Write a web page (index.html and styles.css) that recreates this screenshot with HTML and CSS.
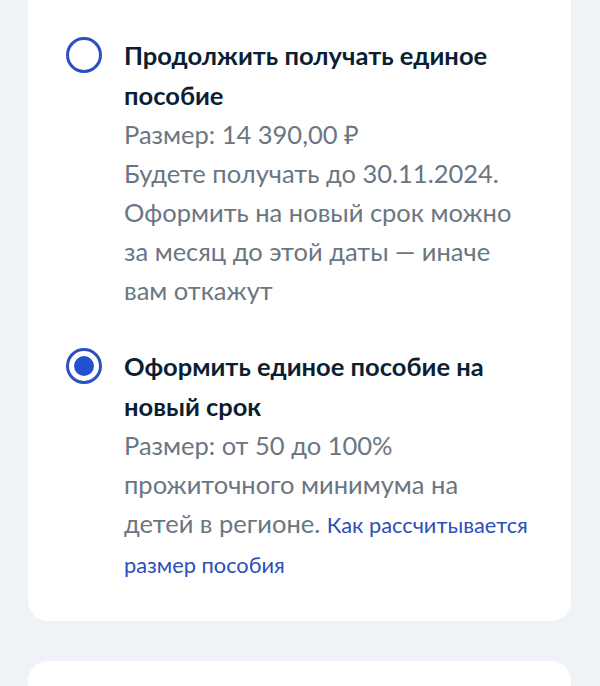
FILE: index.html
```html
<!DOCTYPE html>
<html lang="ru">
<head>
  <meta charset="UTF-8">
  <title>Единое пособие</title>
  <meta name="viewport" content="width=device-width, initial-scale=1.0">
  <link rel="stylesheet" href="styles.css">
</head>
<body>

  <div class="page">
    <div class="card">
      <!-- Вариант 1 -->
      <div class="option">
        <span class="radio"></span>
        <div class="option-text">
          <div class="option-title">Продолжить получать единое пособие</div>
          <div class="option-desc">
            Размер: 14 390,00 ₽<br>
            Будете получать до 30.11.2024. Оформить на новый срок можно за месяц до этой даты — иначе вам откажут
          </div>
        </div>
      </div>

      <!-- Вариант 2 -->
      <div class="option">
        <span class="radio checked"></span>
        <div class="option-text">
          <div class="option-title">Оформить единое пособие на новый срок</div>
          <div class="option-desc">
            Размер: от 50 до 100% прожиточного минимума на детей в регионе. <a href="#" class="link">Как рассчитывается размер пособия</a>
          </div>
        </div>
      </div>
    </div>

    <div class="card card-next"></div>
  </div>

</body>
</html>
```

FILE: styles.css
```css
body {
  margin: 0;
  background: #eff2f7;
  font-family: Lato, "Open Sans", Arial, sans-serif;
  color: #0b1f33;
}
.page {
  padding: 0 29px 0 28px;
}
.card {
  background: white;
  border-radius: 0 0 20px 20px;
  padding: 35px 40px 37px 38px;
}
.card-next {
  margin-top: 40px;
  border-radius: 20px;
  height: 80px;
  padding: 0;
}
.option {
  display: flex;
  gap: 22px;
}
.option + .option {
  margin-top: 36px;
}
.radio {
  flex: none;
  box-sizing: border-box;
  width: 36px;
  height: 36px;
  margin-top: 2px;
  border: 3px solid #2c4fc1;
  border-radius: 50%;
  display: flex;
  align-items: center;
  justify-content: center;
}
.radio.checked::after {
  content: "";
  width: 20px;
  height: 20px;
  border-radius: 50%;
  background: #2450d2;
}
.option-text {
  flex: 1;
}
.option-title {
  font-size: 25.5px;
  font-weight: bold;
  line-height: 40px;
}
.option-desc {
  font-size: 25.5px;
  line-height: 39px;
  color: #6b7682;
}
.link {
  font-size: 21.8px;
  color: #2c4fb8;
  text-decoration: none;
}
```
